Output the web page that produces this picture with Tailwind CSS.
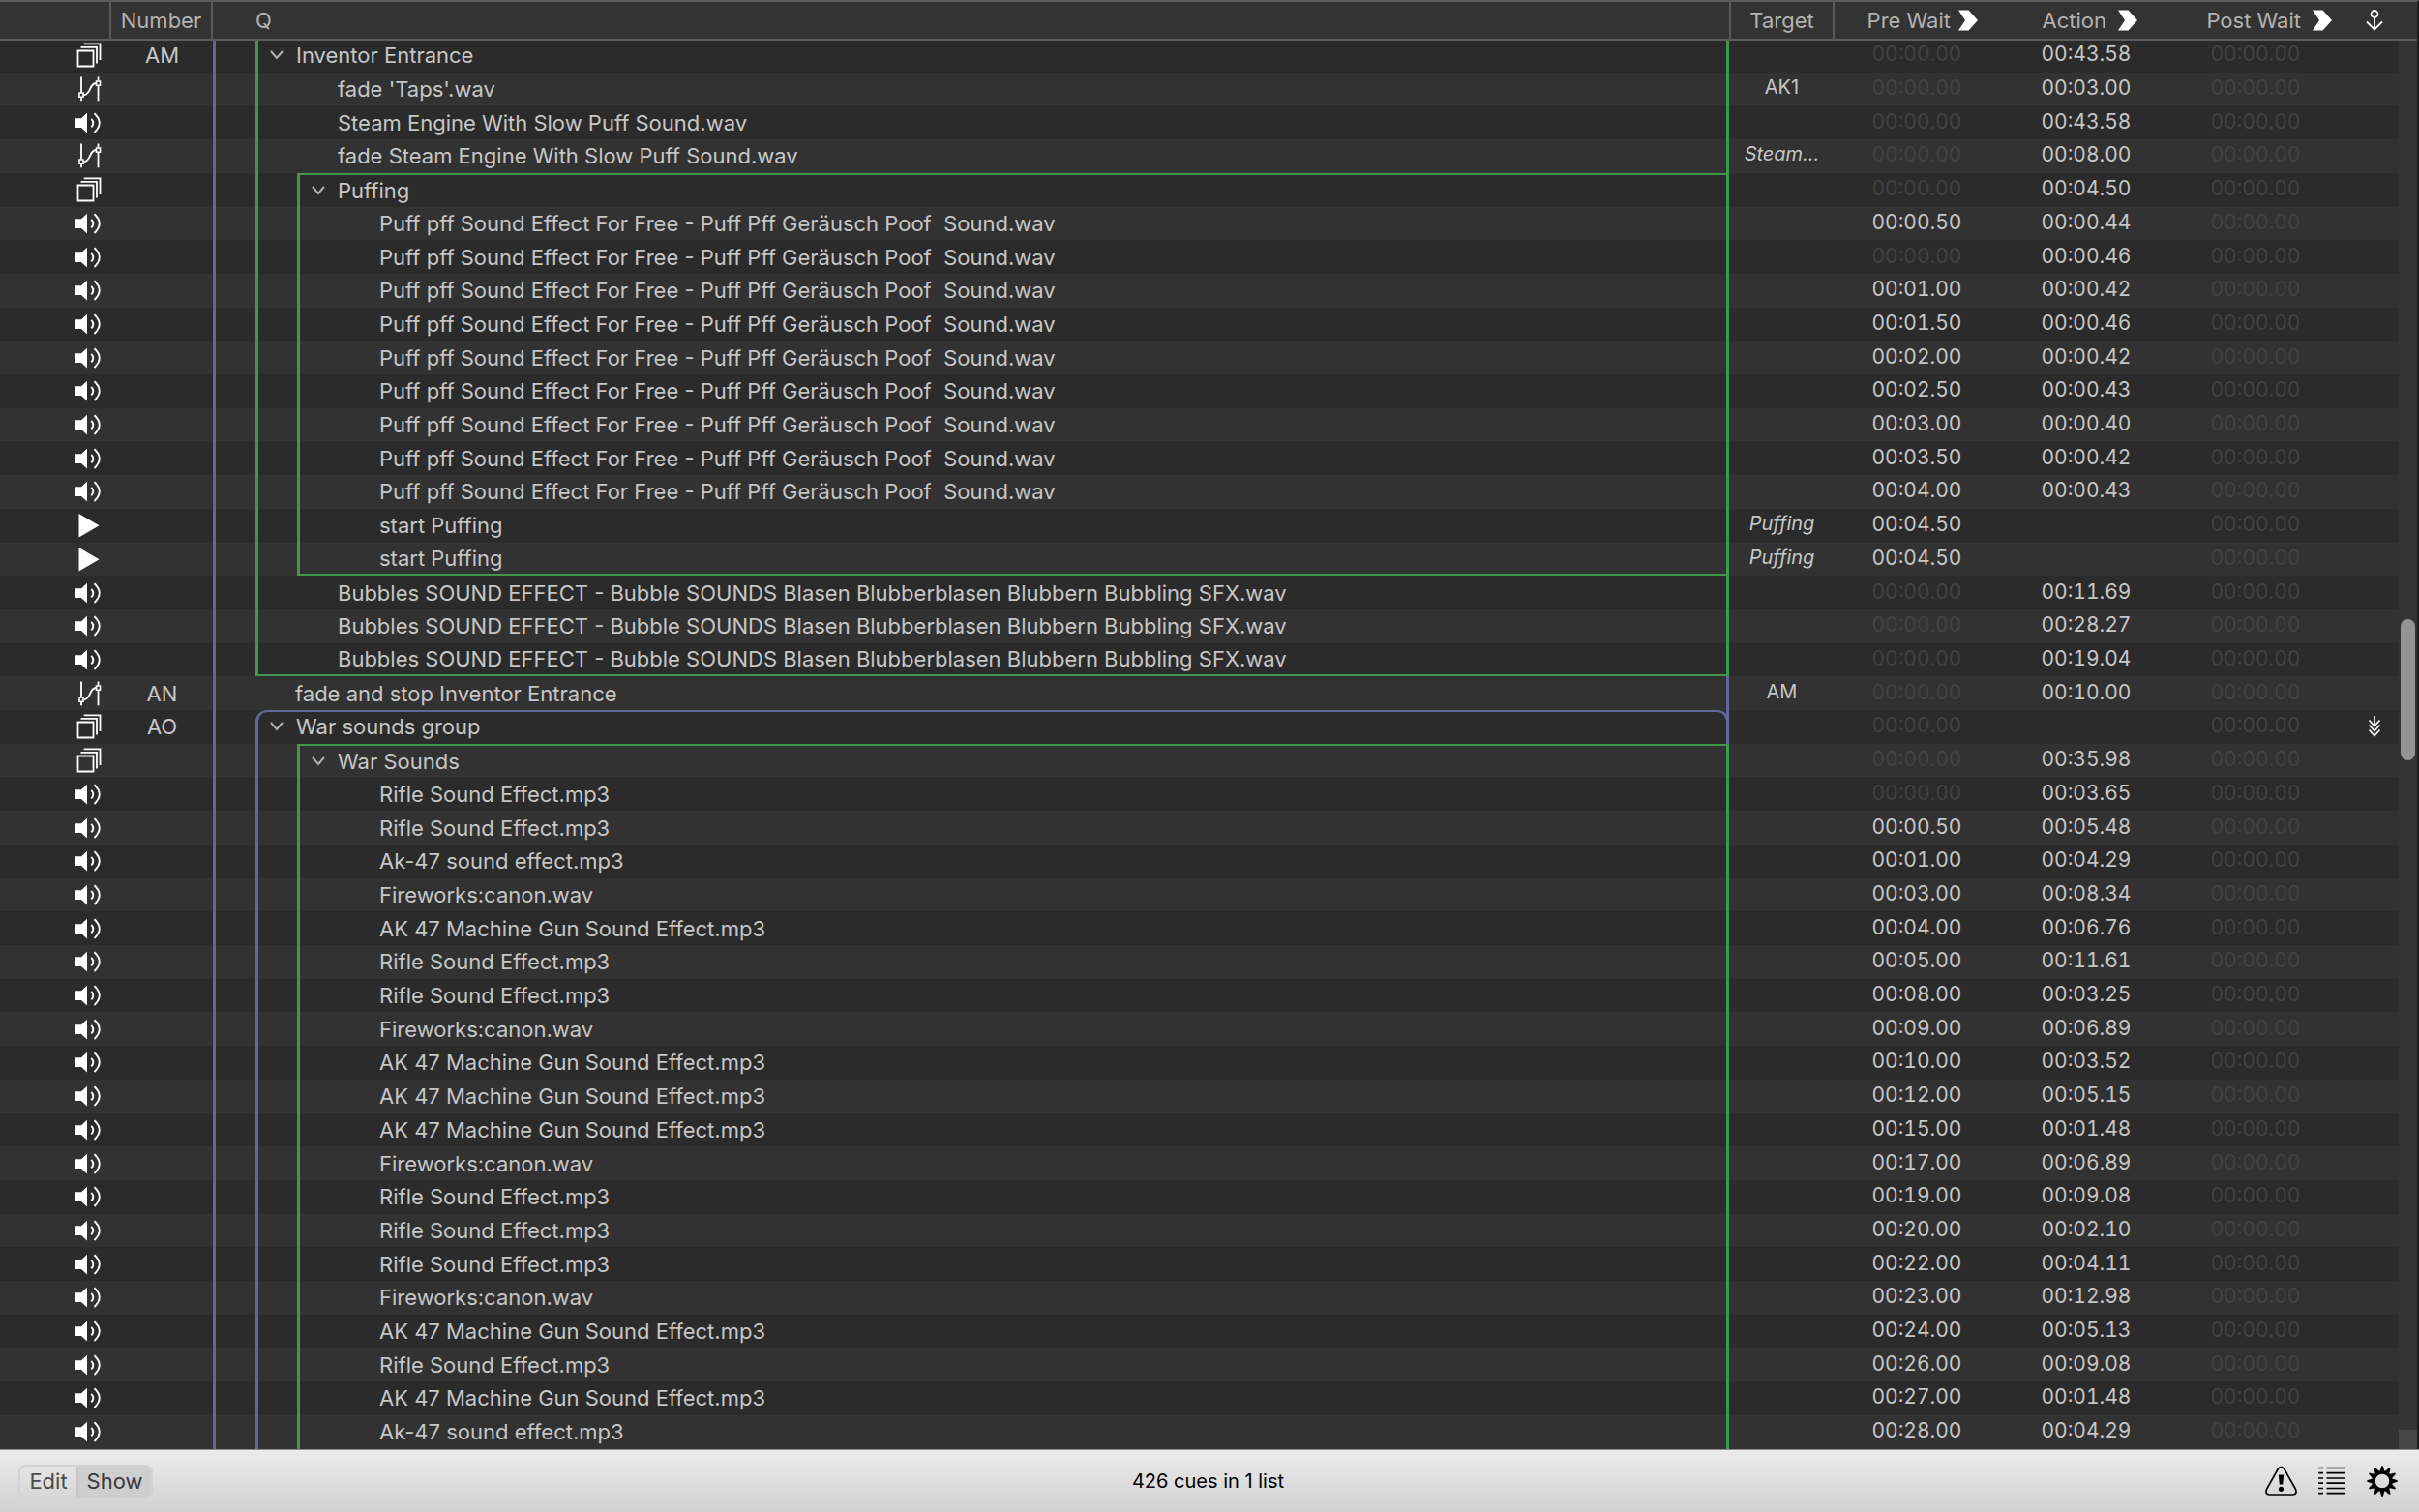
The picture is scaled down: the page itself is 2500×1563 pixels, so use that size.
<!DOCTYPE html>
<html lang="en">
<head>
  <meta charset="UTF-8" />
  <meta name="viewport" content="width=device-width, initial-scale=1.0" />
  <title>Cue List</title>
  <script src="https://cdn.jsdelivr.net/npm/@tailwindcss/browser@4"></script>
</head>
<body class="h-screen flex flex-col overflow-hidden bg-[#323232] font-['Inter',sans-serif] text-[22px] leading-7 text-[#c6c6c6]">
  <svg class="hidden">
    <symbol id="group" viewBox="0 0 28 28">
      <path d="M3.5 9.5h16v16h-16zM6.5 5.8h16.5v16.7M9.7 2.3h16.8v16.8" fill="none" stroke="#fff" stroke-width="1.8" />
    </symbol>
    <symbol id="fade" viewBox="0 0 28 28">
      <path d="M7 1.5v16.2M7 22.5v3.8M24.5 1.5v4M24.5 10.5v15.8M9.5 20.2C17 20 15 8.5 22 8" fill="none" stroke="#fff" stroke-width="1.8" />
      <path d="M5 18h4v4.3h-4zM22.5 6h4v4.3h-4z" fill="none" stroke="#fff" stroke-width="1.6" />
    </symbol>
    <symbol id="audio" viewBox="0 0 28 28">
      <path d="M1 9.3h6L13 3.7v20.8L7 19H1z" fill="#fff" />
      <path d="M17.3 9.8q4 4.3 0 8.6M20.5 4.2q10.5 9.9 0 19.8" fill="none" stroke="#fff" stroke-width="1.9" />
    </symbol>
    <symbol id="start" viewBox="0 0 28 28">
      <path d="M4.5 2v24.5L25.5 14.2z" fill="#fff" />
    </symbol>
    <symbol id="arrow" viewBox="0 0 20 22">
      <path d="M0 .5h10.5L20 11l-9.500 10.5H0L7 11z" fill="#fff" />
    </symbol>
    <symbol id="follow" viewBox="0 0 14 22">
      <path d="M7 0v10M1.5 4.5L7 10.5l5.500-6M1.5 9.5L7 15.5l5.500-6M1.5 14.5L7 20.5l5.500-6" fill="none" stroke="#fff" stroke-width="1.7" />
    </symbol>
  </svg>

  <main class="flex-1 min-h-0 flex">
    <div class="flex-1 min-w-0 overflow-hidden">
      <table class="w-full h-full table-fixed border-separate border-spacing-0 whitespace-nowrap">
        <colgroup>
          <col class="w-[115px]" />
          <col class="w-[105px]" />
          <col class="w-[44px]" />
          <col class="w-[43px]" />
          <col />
          <col class="w-[109px]" />
          <col class="w-[170px]" />
          <col class="w-[180px]" />
          <col class="w-[170px]" />
          <col class="w-[63px]" />
        </colgroup>
        <thead class="sticky top-0 z-10 text-[#b2b2b2]">
          <tr class="h-10 *:h-10 *:p-0 *:bg-[#333333] *:border-t-2 *:border-t-[#5c5c5c] *:shadow-[0_2px_0_#5c5c5c] *:font-normal">
            <th class="border-r-2 border-r-[#5a5a5a]"></th>
            <th class="border-r-2 border-r-[#5a5a5a]">Number</th>
            <th></th>
            <th colspan="2" class="text-left">Q</th>
            <th class="border-x-2 border-x-[#5a5a5a]">Target</th>
            <th><div class="flex items-center justify-end gap-2 pr-[22px]">Pre Wait <svg class="w-5 h-[22px]"><use href="#arrow" /></svg></div></th>
            <th><div class="flex items-center justify-end gap-3 pr-[37px]">Action <svg class="w-5 h-[22px]"><use href="#arrow" /></svg></div></th>
            <th><div class="flex items-center justify-end gap-3 pr-[6px]">Post Wait <svg class="w-5 h-[22px]"><use href="#arrow" /></svg></div></th>
            <th>
              <svg class="block ml-[29px] w-[18px] h-[22px]" viewBox="0 0 18 22" fill="none" stroke="#fff" stroke-width="1.8">
                <circle cx="9" cy="4.5" r="3.5" />
                <path d="M9 8v12.5M1 12.5l8 8 8-8" />
              </svg>
            </th>
          </tr>
        </thead>
        <tbody id="cues"></tbody>
      </table>
    </div>
    <div class="w-[21px] flex flex-col bg-[#333333] border-t-2 border-t-[#5c5c5c] border-r-2 border-r-[#1e1e1e]">
      <div class="h-10 border-b-2 border-[#5c5c5c]"></div>
      <div class="grow-[598]"></div>
      <div class="grow-[146] mx-[2px] rounded-full bg-[#949494]"></div>
      <div class="grow-[692]"></div>
      <div class="h-5 bg-[#464646]"></div>
    </div>
  </main>

  <footer class="h-[65px] grid grid-cols-3 items-center pl-[19px] pr-[22px] border-t border-[#8c8c8c] bg-linear-to-b from-[#ebebeb] to-[#d1d1d1] text-black">
    <div class="flex h-[35px] w-fit rounded-lg border-2 border-[#d2d2d2] overflow-hidden text-[#4a4a4a]">
      <button type="button" class="w-[58px]">Edit</button>
      <button type="button" class="w-[77px] border-l-2 border-[#c6c6c6] bg-[#cecece] text-[#3a3a3a]">Show</button>
    </div>
    <div class="text-center text-[20px]">426 cues in 1 list</div>
    <div class="flex justify-end items-center gap-[22px]">
      <button type="button" aria-label="Warnings">
        <svg class="w-[33px] h-8" viewBox="0 0 33 32">
          <path d="M13.3 3.5q3.200-4.500 6.400 0L31 23.5q3 6-2.500 6.500h-24Q-1 29.500 2 23.500z" fill="none" stroke="#000" stroke-width="1.7" />
          <path d="M13.8 9.5h5.400l-1 10h-3.400z" />
          <circle cx="16.5" cy="24.3" r="2.6" />
        </svg>
      </button>
      <button type="button" aria-label="Lists">
        <svg class="w-7 h-8" viewBox="0 0 28 32" stroke="#000" stroke-width="1.7">
          <path d="M0 2.5h5M8.500 2.5H28M0 7.7h5M8.500 7.7H28M0 13h5M8.500 13H28M0 18.200h5M8.500 18.200H28M0 23.500h5M8.500 23.500H28M0 28.700h5M8.500 28.700H28" />
        </svg>
      </button>
      <button type="button" aria-label="Settings">
        <svg class="w-8 h-8" viewBox="0 0 32 32">
          <circle cx="16" cy="16" r="9" fill="none" stroke="#000" stroke-width="3.5" />
          <g id="teeth"></g>
        </svg>
      </button>
    </div>
  </footer>

  <script>
    const puff = 'Puff pff Sound Effect For Free - Puff Pff Geräusch Poof\u00a0 Sound.wav';
    const bubbles = 'Bubbles SOUND EFFECT - Bubble SOUNDS Blasen Blubberblasen Blubbern Bubbling SFX.wav';
    const rifle = 'Rifle Sound Effect.mp3';
    const ak = 'AK 47 Machine Gun Sound Effect.mp3';
    const ak47 = 'Ak-47 sound effect.mp3';
    const canon = 'Fireworks:canon.wav';
    const none = '00:00.00';

    // icon, guide lines, name, pre wait, action, extras
    const cues = [
      ['group', 'g', 'Inventor Entrance', none, '00:43.58', { number: 'AM', head: true }],
      ['fade', 'g', "fade 'Taps'.wav", none, '00:03.00', { target: 'AK1' }],
      ['audio', 'g', 'Steam Engine With Slow Puff Sound.wav', none, '00:43.58'],
      ['fade', 'g', 'fade Steam Engine With Slow Puff Sound.wav', none, '00:08.00', { target: 'Steam…', italic: true }],
      ['group', 'gg', 'Puffing', none, '00:04.50', { head: true, top: true }],
      ['audio', 'gg', puff, '00:00.50', '00:00.44'],
      ['audio', 'gg', puff, none, '00:00.46'],
      ['audio', 'gg', puff, '00:01.00', '00:00.42'],
      ['audio', 'gg', puff, '00:01.50', '00:00.46'],
      ['audio', 'gg', puff, '00:02.00', '00:00.42'],
      ['audio', 'gg', puff, '00:02.50', '00:00.43'],
      ['audio', 'gg', puff, '00:03.00', '00:00.40'],
      ['audio', 'gg', puff, '00:03.50', '00:00.42'],
      ['audio', 'gg', puff, '00:04.00', '00:00.43'],
      ['start', 'gg', 'start Puffing', '00:04.50', '', { target: 'Puffing', italic: true }],
      ['start', 'gg', 'start Puffing', '00:04.50', '', { target: 'Puffing', italic: true, bottom: true }],
      ['audio', 'g', bubbles, none, '00:11.69'],
      ['audio', 'g', bubbles, none, '00:28.27'],
      ['audio', 'g', bubbles, none, '00:19.04', { bottom: true }],
      ['fade', '', 'fade and stop Inventor Entrance', none, '00:10.00', { number: 'AN', target: 'AM' }],
      ['group', 'p', 'War sounds group', none, '', { number: 'AO', head: true, rounded: true, follow: true }],
      ['group', 'pg', 'War Sounds', none, '00:35.98', { head: true, top: true }],
      ['audio', 'pg', rifle, none, '00:03.65'],
      ['audio', 'pg', rifle, '00:00.50', '00:05.48'],
      ['audio', 'pg', ak47, '00:01.00', '00:04.29'],
      ['audio', 'pg', canon, '00:03.00', '00:08.34'],
      ['audio', 'pg', ak, '00:04.00', '00:06.76'],
      ['audio', 'pg', rifle, '00:05.00', '00:11.61'],
      ['audio', 'pg', rifle, '00:08.00', '00:03.25'],
      ['audio', 'pg', canon, '00:09.00', '00:06.89'],
      ['audio', 'pg', ak, '00:10.00', '00:03.52'],
      ['audio', 'pg', ak, '00:12.00', '00:05.15'],
      ['audio', 'pg', ak, '00:15.00', '00:01.48'],
      ['audio', 'pg', canon, '00:17.00', '00:06.89'],
      ['audio', 'pg', rifle, '00:19.00', '00:09.08'],
      ['audio', 'pg', rifle, '00:20.00', '00:02.10'],
      ['audio', 'pg', rifle, '00:22.00', '00:04.11'],
      ['audio', 'pg', canon, '00:23.00', '00:12.98'],
      ['audio', 'pg', ak, '00:24.00', '00:05.13'],
      ['audio', 'pg', rifle, '00:26.00', '00:09.08'],
      ['audio', 'pg', ak, '00:27.00', '00:01.48'],
      ['audio', 'pg', ak47, '00:28.00', '00:04.29']
    ];

    const colors = { g: 'border-[#41974a]', p: 'border-[#63669a]' };

    function time(value) {
      const color = value === none ? 'text-[#424242]' : '';
      return `<td class="p-0 pb-[2px] text-center text-[21px] tabular-nums ${color}">${value}</td>`;
    }

    function nameCells(lines, name, extra) {
      const all = 'p' + lines;
      let html = '';
      for (let i = 0; i < all.length - 1; i++) {
        html += `<td class="p-0 border-l-3 ${colors[all[i]]}"></td>`;
      }
      const edges = (extra.top ? 'border-t-2 ' : '') + (extra.bottom ? 'border-b-2 ' : '');
      const outline = extra.rounded
        ? 'relative border-l-transparent before:absolute before:inset-y-0 before:left-[-3px] before:right-[-3px] before:border-x-3 before:border-t-2 before:border-[#63669a] before:rounded-t-xl before:pointer-events-none'
        : '';
      const label = extra.head
        ? `<div class="flex items-center gap-[13px] pl-3">
            <button type="button" aria-label="Collapse ${name}"><svg class="block w-[14px] h-[10px]" viewBox="0 0 14 10" fill="none" stroke="#b0b0b0" stroke-width="2"><path d="M1 1l6 7 6-7" /></svg></button>
            ${name}
          </div>`
        : `<div class="pl-[82px]">${name}</div>`;
      html += `<td colspan="${4 - all.length}" class="p-0 border-x-3 ${edges} ${colors[all[all.length - 1]]} ${outline}">${label}</td>`;
      return html;
    }

    document.getElementById('cues').innerHTML = cues.map(([icon, lines, name, pre, action, extra = {}]) => `
      <tr class="h-8 odd:bg-[#2b2b2b] even:bg-[#323232]">
        <td class="p-0"><svg class="block ml-[77px] w-7 h-7"><use href="#${icon}" /></svg></td>
        <td class="p-0 text-center">${extra.number || ''}</td>
        ${nameCells(lines, name, extra)}
        <td class="p-0 pb-1 text-center text-[20px] ${extra.italic ? 'italic' : ''}">${extra.target || ''}</td>
        ${time(pre)}
        ${time(action)}
        ${time(none)}
        <td class="p-0">${extra.follow ? '<svg class="block ml-[31px] w-[14px] h-[22px]"><use href="#follow" /></svg>' : ''}</td>
      </tr>`).join('');

    // gear teeth
    let teeth = '';
    for (let i = 0; i < 12; i++) {
      teeth += `<path d="M13.3 6.5L15.2 .3h1.600l1.900 6.200z" transform="rotate(${i * 30} 16 16)" />`;
    }
    document.getElementById('teeth').innerHTML = teeth;
  </script>
</body>
</html>
